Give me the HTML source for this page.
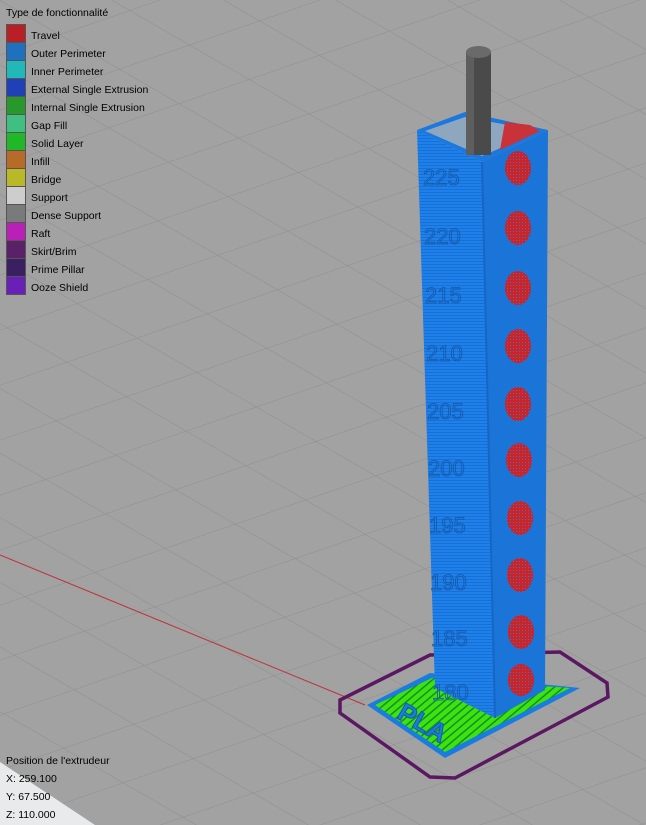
<!DOCTYPE html>
<html><head><meta charset="utf-8"><style>
html,body{margin:0;padding:0;width:646px;height:825px;overflow:hidden;background:#a2a2a2;font-family:"Liberation Sans",sans-serif;}
.t{position:absolute;font-size:10.5px;color:#000;}
</style></head><body>
<svg width="646" height="825" style="position:absolute;left:0;top:0">
<defs>
<pattern id="g1" width="52" height="52" patternUnits="userSpaceOnUse" patternTransform="rotate(-19)">
<line x1="0" y1="0" x2="52" y2="0" stroke="#8e8e8e" stroke-width="1"/>
</pattern>
<pattern id="g2" width="56" height="56" patternUnits="userSpaceOnUse" patternTransform="rotate(30)">
<line x1="0" y1="0" x2="56" y2="0" stroke="#8e8e8e" stroke-width="1"/>
</pattern>
<pattern id="stripe" width="6" height="6" patternUnits="userSpaceOnUse" patternTransform="rotate(-40)">
<rect width="6" height="6" fill="#3be40f"/><rect width="6" height="1.5" fill="#1a8a2a"/>
</pattern>
<pattern id="redh" width="3" height="3" patternUnits="userSpaceOnUse">
<rect width="3" height="3" fill="#c8242a"/><rect width="1" height="1" fill="#5a6ab0"/>
</pattern>
<pattern id="lay" width="4" height="3" patternUnits="userSpaceOnUse">
<rect width="4" height="3" fill="#1e80ea"/><rect width="4" height="1" fill="#1870d4"/>
</pattern>
</defs>
<rect width="646" height="825" fill="#a2a2a2"/>
<rect width="646" height="825" fill="url(#g1)"/>
<rect width="646" height="825" fill="url(#g2)"/>
<polygon points="0,762 95,825 0,825" fill="#e8eaec"/>
<line x1="0" y1="555" x2="365" y2="705" stroke="#c0303a" stroke-width="1"/>
<polygon points="340,700 340,713 430,777 455,778 608,697 607,683 560,652 430,655" fill="none" stroke="#5a1860" stroke-width="3.5"/>
<polygon points="367,705 430,673 580,688 445,758" fill="#1a7be0"/>
<polygon points="375,705 432,678 570,688 445,752" fill="url(#stripe)"/>
<text x="395" y="720" font-size="26" font-weight="bold" fill="#1a7be0" stroke="#135aa8" transform="rotate(30 400 720)" font-family="Liberation Sans">PLA</text>
<polygon points="417,130 482,162 495,718 435,688" fill="url(#lay)"/>
<polygon points="482,162 548,130 545,690 495,718" fill="#1b74d8"/>
<polygon points="417,130 465,112 548,130 482,162" fill="#1a78df"/>
<polygon points="425,131 465,117 540,131 482,156" fill="#8fa6bf"/>
<polygon points="500,150 540,131 530,125 505,122" fill="#c83238"/>
<line x1="482" y1="162" x2="495" y2="718" stroke="#1766c4" stroke-width="2"/>
<g fill="url(#redh)">
<ellipse cx="518" cy="168" rx="13" ry="17"/>
<ellipse cx="518" cy="228" rx="13" ry="17"/>
<ellipse cx="518" cy="288" rx="13" ry="17"/>
<ellipse cx="518" cy="346" rx="13" ry="17"/>
<ellipse cx="518" cy="404" rx="13" ry="17"/>
<ellipse cx="519" cy="460" rx="13" ry="17"/>
<ellipse cx="520" cy="518" rx="13" ry="17"/>
<ellipse cx="520" cy="575" rx="13" ry="17"/>
<ellipse cx="521" cy="632" rx="13" ry="17"/>
<ellipse cx="521" cy="680" rx="13" ry="16"/>
</g>
<g font-size="22" fill="none" stroke="#1458a8" stroke-width="0.8" font-family="Liberation Sans">
<text x="423" y="185">225</text><text x="424" y="244">220</text><text x="425" y="303">215</text>
<text x="426" y="361">210</text><text x="427" y="419">205</text><text x="428" y="476">200</text>
<text x="429" y="533">195</text><text x="430" y="590">190</text><text x="431" y="646">185</text>
<text x="432" y="700">180</text>
</g>
<rect x="466" y="52" width="25" height="103" fill="#4a4a4a"/>
<rect x="466" y="52" width="8" height="103" fill="#5e5e5e"/>
<ellipse cx="478.5" cy="52" rx="12.5" ry="6" fill="#6a6a6a"/>
<g stroke="#555" stroke-width="1">
<rect x="6.5" y="24.5" width="19" height="18" fill="#b82026"/>
<rect x="6.5" y="42.5" width="19" height="18" fill="#2070c0"/>
<rect x="6.5" y="60.5" width="19" height="18" fill="#20b8b8"/>
<rect x="6.5" y="78.5" width="19" height="18" fill="#2040b8"/>
<rect x="6.5" y="96.5" width="19" height="18" fill="#28982c"/>
<rect x="6.5" y="114.5" width="19" height="18" fill="#40c080"/>
<rect x="6.5" y="132.5" width="19" height="18" fill="#20b828"/>
<rect x="6.5" y="150.5" width="19" height="18" fill="#b86a28"/>
<rect x="6.5" y="168.5" width="19" height="18" fill="#b8b828"/>
<rect x="6.5" y="186.5" width="19" height="18" fill="#cdcdcd"/>
<rect x="6.5" y="204.5" width="19" height="18" fill="#7a7a7a"/>
<rect x="6.5" y="222.5" width="19" height="18" fill="#b820b8"/>
<rect x="6.5" y="240.5" width="19" height="18" fill="#5a2068"/>
<rect x="6.5" y="258.5" width="19" height="18" fill="#3a2060"/>
<rect x="6.5" y="276.5" width="19" height="18" fill="#6a20b8"/>
</g>
</svg>
<div class="t" style="left:6px;top:7px">Type de fonctionnalité</div>
<div class="t" style="left:31px;top:27px;line-height:18px">Travel<br>Outer Perimeter<br>Inner Perimeter<br>External Single Extrusion<br>Internal Single Extrusion<br>Gap Fill<br>Solid Layer<br>Infill<br>Bridge<br>Support<br>Dense Support<br>Raft<br>Skirt/Brim<br>Prime Pillar<br>Ooze Shield</div>
<div class="t" style="left:6px;top:752px;line-height:18px">Position de l'extrudeur<br>X: 259.100<br>Y: 67.500<br>Z: 110.000</div>
</body></html>
